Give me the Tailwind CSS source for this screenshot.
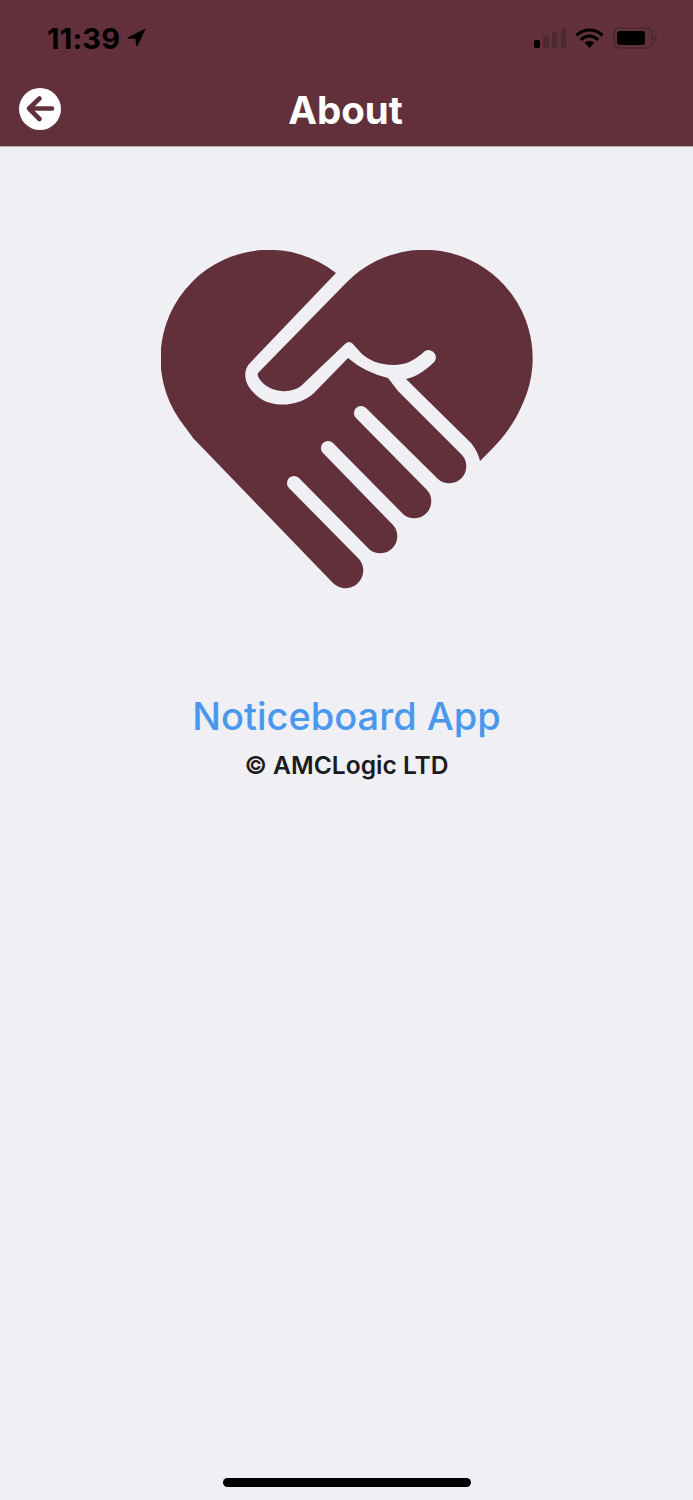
<!DOCTYPE html>
<html lang="en">
<head>
    <meta charset="UTF-8">
    <meta name="viewport" content="width=device-width, initial-scale=1.0">
    <title>About</title>
    <script src="https://cdn.jsdelivr.net/npm/@tailwindcss/browser@4"></script>
</head>
<body class="bg-[#efeff4] font-['Inter',sans-serif]">
    <div class="flex h-[1500px] w-[693px] flex-col overflow-hidden">
        <!-- Header -->
        <header class="h-[147px] shrink-0 border-b border-[#b3aeb0] bg-[#61303b]">
            <!-- Status bar -->
            <div class="flex h-[73px] items-center justify-between pl-[47px] pr-[36px] pt-[3px]">
                <div class="flex items-center gap-[6px]">
                    <span class="text-[29px] font-bold leading-none tracking-[0.2px] text-black">11:39</span>
                    <svg class="h-[20px] w-[20px]" viewBox="0 0 20 20">
                        <path d="M18.6 1 L1.5 9.6 Q1 10.4 2 10.6 L9.4 10.8 L10.2 18 Q10.6 19 11.4 18.2 L19.2 1.8 Q19.4 .8 18.6 1 Z" fill="#000"/>
                    </svg>
                </div>
                <div class="flex items-center gap-[10px]">
                    <svg class="h-[20px] w-[32px]" viewBox="0 0 32 20">
                        <rect x="0" y="12" width="6" height="8" rx="1.5" fill="#000"/>
                        <rect x="9" y="8" width="6" height="12" rx="1.5" fill="#4c2830"/>
                        <rect x="18" y="4" width="5" height="16" rx="1.5" fill="#4c2830"/>
                        <rect x="27" y="0" width="5" height="20" rx="1.5" fill="#4c2830"/>
                    </svg>
                    <svg class="h-[20px] w-[27px]" viewBox="0 0 27 20">
                        <path d="M1.5 6.5 C8.5 .5 18.5 .5 25.5 6.5 M5.8 11 C10.5 7 16.5 7 21.2 11" fill="none" stroke="#000" stroke-width="3.2" stroke-linecap="round"/>
                        <path d="M13.5 20 L8.6 14.6 C11.3 12.4 15.7 12.4 18.4 14.6 Z" fill="#000"/>
                    </svg>
                    <svg class="h-[22px] w-[44px]" viewBox="0 0 44 22">
                        <rect x="1" y="1" width="38" height="20" rx="5.5" fill="none" stroke="#4c2830" stroke-width="1.6"/>
                        <rect x="4" y="4" width="28" height="14" rx="3" fill="#000"/>
                        <path d="M41 7.5 C43 8 44 9.5 44 11 C44 12.5 43 14 41 14.5 Z" fill="#4c2830"/>
                    </svg>
                </div>
            </div>
            <!-- Nav bar -->
            <div class="grid h-[74px] grid-cols-[1fr_auto_1fr] items-center pb-[1px] pl-[19px]">
                <button class="mb-[2px] flex h-[42px] w-[42px] items-center justify-center rounded-full bg-white">
                    <svg class="h-[42px] w-[42px]" viewBox="0 0 42 42">
                        <path d="M33 20.5 H11 M20.5 10.5 L10 20.5 L20.5 31" fill="none" stroke="#61303b" stroke-width="4.6" stroke-linecap="round" stroke-linejoin="round"/>
                    </svg>
                </button>
                <h1 class="mt-[2px] pr-[21px] text-[38.5px] font-bold leading-none text-white">About</h1>
                <div></div>
            </div>
        </header>

        <!-- Content -->
        <main class="flex flex-col items-center pt-[103px]">
            <svg class="h-[340px] w-[372px]" viewBox="160 250 372 340">
                <path fill="#61303b" d="M335 273 A108.5 108.5 0 0 0 184 427 C187 431 190 435 192 438 L331 582 A17 17 0 0 0 358 559 L288 488 A7 7 0 0 1 298 478 L368 549 A17 17 0 0 0 392 525 L322 453 A7 7 0 0 1 332 443 L402 514 A17 17 0 0 0 426 490 L355 418 A7 7 0 0 1 365 408 L437 479 A17 17 0 0 0 461 455 L397 391 L387 378 Q363 372 347 358 L313 393 C300 406 270 410 255 395 C240 382 243 368 250 362 Z"/>
                <path fill="#61303b" d="M345 283 A108.5 108.5 0 0 1 522 403 C515 420 505 435 490 450 L479 461 C477 452 473 447 470 443 L405 379 C415 377 425 370 431 364 A7 7 0 0 0 424 351 C412 362 403 365 393 365 C378 365 367 360 360 353 L352 344 Q348 340 344 344 L300 386 C290 394 270 393 260 381 C256 376 256 374 258 372 Z"/>
            </svg>
            <h2 class="mt-[103px] text-[38px] font-medium leading-[46px] text-[#4a98ee]">Noticeboard App</h2>
            <p class="mt-[10px] text-[24.6px] font-semibold leading-[32px] text-[#1c1c1e]">© AMCLogic LTD</p>
        </main>

        <!-- Home indicator -->
        <div class="mt-auto flex justify-center pb-[13px]">
            <div class="h-[9px] w-[248px] rounded-full bg-black"></div>
        </div>
    </div>
</body>
</html>
